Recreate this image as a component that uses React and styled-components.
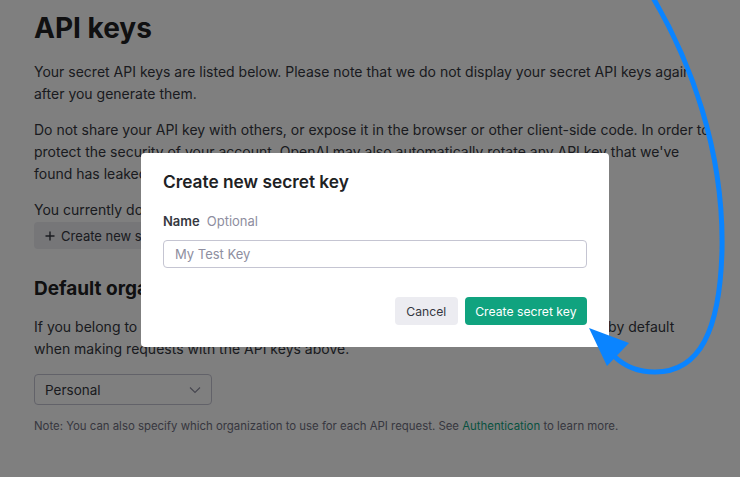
import React from "react";
import styled, { createGlobalStyle } from "styled-components";

const GlobalStyle = createGlobalStyle`
  html, body {
    margin: 0;
    padding: 0;
    background: #ffffff;
    font-family: Inter, "Noto Sans", "Liberation Sans", sans-serif;
    overflow: hidden;
  }
`;

const Page = styled.div`
  width: 740px;
  height: 477px;
  box-sizing: border-box;
  padding: 11px 0 0 34px;
  color: #353740;
  position: relative;
  overflow: hidden;
`;

const Title = styled.h1`
  margin: 0 0 16px;
  font-size: 28px;
  line-height: 34px;
  font-weight: 700;
  color: #202123;
`;

const Paragraph = styled.p`
  margin: 0 0 ${(p) => (p.$tight ? "0" : "14px")};
  font-size: 14px;
  line-height: 22px;
  white-space: nowrap;
`;

const GhostButton = styled.button`
  display: flex;
  align-items: center;
  gap: 6px;
  height: 27px;
  padding: 0 14px 0 11px;
  margin-top: 1px;
  border: none;
  border-radius: 4px;
  background: #ececf1;
  color: #353740;
  font-family: inherit;
  font-size: 13px;
`;

const PlusIcon = styled.svg`
  flex: none;
`;

const SectionTitle = styled.h2`
  margin: 27px 0 14px;
  font-size: 19px;
  line-height: 26px;
  font-weight: 700;
  color: #202123;
`;

const Select = styled.div`
  display: flex;
  align-items: center;
  justify-content: space-between;
  width: 178px;
  height: 31px;
  box-sizing: border-box;
  padding: 0 10px;
  margin-top: 1px;
  border: 1px solid #c5c5d2;
  border-radius: 4px;
  font-size: 13.5px;
  color: #353740;
`;

const Note = styled.p`
  margin: 13px 0 0;
  font-size: 11.4px;
  line-height: 16px;
  color: #6e6e80;
`;

const Link = styled.span`
  color: #10a37f;
`;

const Backdrop = styled.div`
  position: absolute;
  inset: 0;
  background: rgba(0, 0, 0, 0.5);
`;

const Modal = styled.div`
  position: absolute;
  left: 141px;
  top: 153px;
  width: 468px;
  height: 194px;
  box-sizing: border-box;
  padding: 17px 22px 22px;
  background: #ffffff;
  border-radius: 4px;
  display: flex;
  flex-direction: column;
`;

const ModalTitle = styled.div`
  font-size: 17.3px;
  line-height: 24px;
  font-weight: 600;
  color: #202123;
`;

const Label = styled.div`
  margin-top: 19px;
  font-size: 13px;
  line-height: 16px;
  display: flex;
  gap: 7px;
`;

const LabelName = styled.span`
  font-weight: 600;
  color: #353740;
`;

const LabelHint = styled.span`
  color: #8e8ea0;
`;

const Input = styled.div`
  margin-top: 11px;
  height: 28px;
  box-sizing: border-box;
  border: 1px solid #c5c5d2;
  border-radius: 4px;
  padding: 0 11px;
  display: flex;
  align-items: center;
  font-size: 13px;
  color: #8e8ea0;
`;

const Actions = styled.div`
  margin-top: 29px;
  display: flex;
  justify-content: flex-end;
  gap: 7px;
`;

const ActionButton = styled.button`
  height: 28px;
  padding: 0 ${(p) => (p.$primary ? "10.5px" : "11.5px")};
  border: none;
  border-radius: 4px;
  font-family: inherit;
  font-size: 12.2px;
  background: ${(p) => (p.$primary ? "#10a37f" : "#ececf1")};
  color: ${(p) => (p.$primary ? "#ffffff" : "#353740")};
`;

const ArrowLayer = styled.svg`
  position: absolute;
  left: 0;
  top: 0;
  pointer-events: none;
`;

export default function App() {
  return (
    <>
      <GlobalStyle />
      <Page>
        <Title>API keys</Title>
        <Paragraph>
          Your secret API keys are listed below. Please note that we do not display your secret API keys again
          <br />
          after you generate them.
        </Paragraph>
        <Paragraph>
          Do not share your API key with others, or expose it in the browser or other client-side code. In order to
          <br />
          protect the security of your account, OpenAI may also automatically rotate any API key that we've
          <br />
          found has leaked publicly.
        </Paragraph>
        <Paragraph $tight>You currently do not have any API keys. Please create one below.</Paragraph>
        <GhostButton>
          <PlusIcon width="10" height="10" viewBox="0 0 10 10" fill="none">
            <path d="M5 0.5v9M0.5 5h9" stroke="#353740" strokeWidth="1.4" />
          </PlusIcon>
          <span>Create new secret key</span>
        </GhostButton>
        <SectionTitle>Default organization</SectionTitle>
        <Paragraph>
          If you belong to multiple organizations, this setting controls which organization is used by default
          <br />
          when making requests with the API keys above.
        </Paragraph>
        <Select>
          <span>Personal</span>
          <svg width="12" height="8" viewBox="0 0 12 8" fill="none">
            <path d="M1 1.5l5 5 5-5" stroke="#8e8ea0" strokeWidth="1.2" />
          </svg>
        </Select>
        <Note>
          Note: You can also specify which organization to use for each API request. See <Link>Authentication</Link> to
          learn more.
        </Note>

        <Backdrop />
        <Modal>
          <ModalTitle>Create new secret key</ModalTitle>
          <Label>
            <LabelName>Name</LabelName>
            <LabelHint>Optional</LabelHint>
          </Label>
          <Input>My Test Key</Input>
          <Actions>
            <ActionButton>Cancel</ActionButton>
            <ActionButton $primary>Create secret key</ActionButton>
          </Actions>
        </Modal>

        <ArrowLayer width="740" height="477" viewBox="0 0 740 477">
          <path
            d="M652 -4 C690 60 724 150 722 250 C720 330 700 372 655 372 C636 372 622 364 614 356"
            fill="none"
            stroke="#0a84ff"
            strokeWidth="5"
          />
          <polygon points="589,328 629,343 607,366" fill="#0a84ff" />
        </ArrowLayer>
      </Page>
    </>
  );
}
